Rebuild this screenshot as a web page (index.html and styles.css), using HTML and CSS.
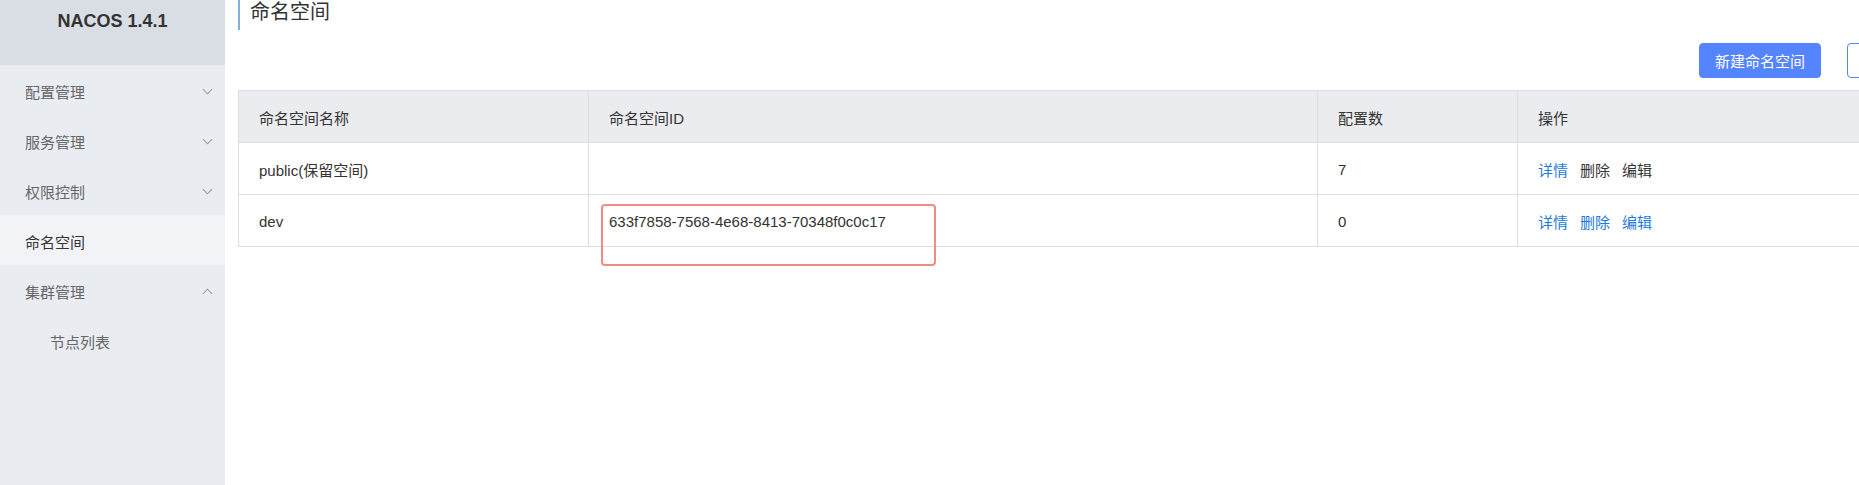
FILE: index.html
```html
<!DOCTYPE html>
<html lang="zh-CN">
<head>
<meta charset="utf-8">
<title>NACOS 1.4.1 - 命名空间</title>
<link rel="stylesheet" href="styles.css">
</head>
<body>
<div class="layout">
  <aside class="sidebar">
    <div class="brand">NACOS 1.4.1</div>
    <ul class="menu">
      <li class="menu-item"><span>配置管理</span><svg class="chev" viewBox="0 0 12 7"><path d="M1 1l5 5 5-5" /></svg></li>
      <li class="menu-item"><span>服务管理</span><svg class="chev" viewBox="0 0 12 7"><path d="M1 1l5 5 5-5" /></svg></li>
      <li class="menu-item"><span>权限控制</span><svg class="chev" viewBox="0 0 12 7"><path d="M1 1l5 5 5-5" /></svg></li>
      <li class="menu-item active"><span>命名空间</span></li>
      <li class="menu-item"><span>集群管理</span><svg class="chev" viewBox="0 0 12 7"><path d="M1 6l5-5 5 5" /></svg></li>
      <li class="menu-item sub"><span>节点列表</span></li>
    </ul>
  </aside>
  <main class="main">
    <div class="content">
      <h1 class="page-title">命名空间</h1>
      <div class="toolbar">
        <button class="btn btn-primary">新建命名空间</button>
        <button class="btn btn-outline" aria-label="刷新"><svg class="refresh" viewBox="0 0 16 16"><path d="M13 8a5 5 0 1 1-1.5-3.6M13 2v3h-3" /></svg></button>
      </div>
      <table class="grid">
        <colgroup>
          <col class="c1"><col class="c2"><col class="c3"><col class="c4">
        </colgroup>
        <thead>
          <tr><th>命名空间名称</th><th>命名空间ID</th><th>配置数</th><th>操作</th></tr>
        </thead>
        <tbody>
          <tr>
            <td>public(保留空间)</td>
            <td></td>
            <td>7</td>
            <td class="ops"><a class="link">详情</a><a class="link plain">删除</a><a class="link plain">编辑</a></td>
          </tr>
          <tr>
            <td>dev</td>
            <td>633f7858-7568-4e68-8413-70348f0c0c17</td>
            <td>0</td>
            <td class="ops"><a class="link">详情</a><a class="link">删除</a><a class="link">编辑</a></td>
          </tr>
        </tbody>
      </table>
    </div>
  </main>
</div>
<div class="highlight"></div>
</body>
</html>
```
FILE: styles.css
```css
html, body {
  margin: 0;
  padding: 0;
  height: 100%;
  overflow: hidden;
  background: #fff;
  font-family: "Liberation Sans", "Noto Sans CJK SC", sans-serif;
  font-size: 15px;
  color: #333;
}

.layout {
  display: flex;
  height: 485px;
}

.sidebar {
  width: 225px;
  flex: 0 0 225px;
  background: #e9ecf1;
  height: 100%;
}

.brand {
  height: 65px;
  background: #d9dde4;
  font-weight: bold;
  font-size: 18px;
  color: #333;
  text-align: center;
  line-height: 42px;
}

.menu {
  list-style: none;
  margin: 0;
  padding: 0;
}

.menu-item {
  height: 50px;
  display: flex;
  align-items: center;
  justify-content: space-between;
  padding: 2px 12px 0 25px;
  box-sizing: border-box;
  color: #666;
}

.menu-item.active {
  background: #f2f3f7;
  color: #333;
}

.menu-item.sub {
  padding-left: 50px;
}

.chev {
  width: 11px;
  height: 7px;
  fill: none;
  stroke: #999;
  stroke-width: 1.1;
}

.main {
  flex: 1;
  min-width: 0;
  overflow: hidden;
}

.content {
  width: 1700px;
  padding-left: 13px;
}

.page-title {
  margin: 0;
  height: 30px;
  box-sizing: border-box;
  border-left: 2px solid #80b0de;
  padding: 2px 0 0 10px;
  font-size: 20px;
  font-weight: normal;
  line-height: 20px;
  color: #333;
}

.toolbar {
  display: flex;
  justify-content: flex-end;
  gap: 26px;
  margin-top: 13px;
  margin-bottom: 12px;
}

.btn {
  height: 35px;
  box-sizing: border-box;
  border-radius: 4px;
  font-family: inherit;
  font-size: 15px;
  padding: 0;
  white-space: nowrap;
  cursor: pointer;
}

.btn-primary {
  width: 122px;
  background: #5584ff;
  border: 1px solid #5584ff;
  color: #fff;
  text-align: center;
}

.btn-outline {
  width: 91px;
  background: #fff;
  border: 1px solid #5584ff;
  display: flex;
  align-items: center;
  justify-content: flex-end;
  padding-right: 36px;
}

.refresh {
  width: 16px;
  height: 16px;
  fill: none;
  stroke: #5584ff;
  stroke-width: 1.5;
}

.grid {
  width: 1700px;
  border-collapse: collapse;
  table-layout: fixed;
}

.c1 { width: 350px; }
.c2 { width: 729px; }
.c3 { width: 200px; }
.c4 { width: 421px; }

.grid th,
.grid td {
  border: 1px solid #dcdee3;
  height: 52px;
  box-sizing: border-box;
  padding: 2px 20px 0;
  text-align: left;
  font-weight: normal;
  color: #333;
}

.grid thead th {
  background: #ebecf0;
}

.ops .link {
  margin-right: 12px;
}

.link {
  color: #1e7ad8;
  cursor: pointer;
}

.link.plain {
  color: #333;
}

.highlight {
  position: absolute;
  left: 601px;
  top: 204px;
  width: 335px;
  height: 62px;
  box-sizing: border-box;
  border: 2px solid #f58a85;
  border-radius: 4px;
  pointer-events: none;
}
```
